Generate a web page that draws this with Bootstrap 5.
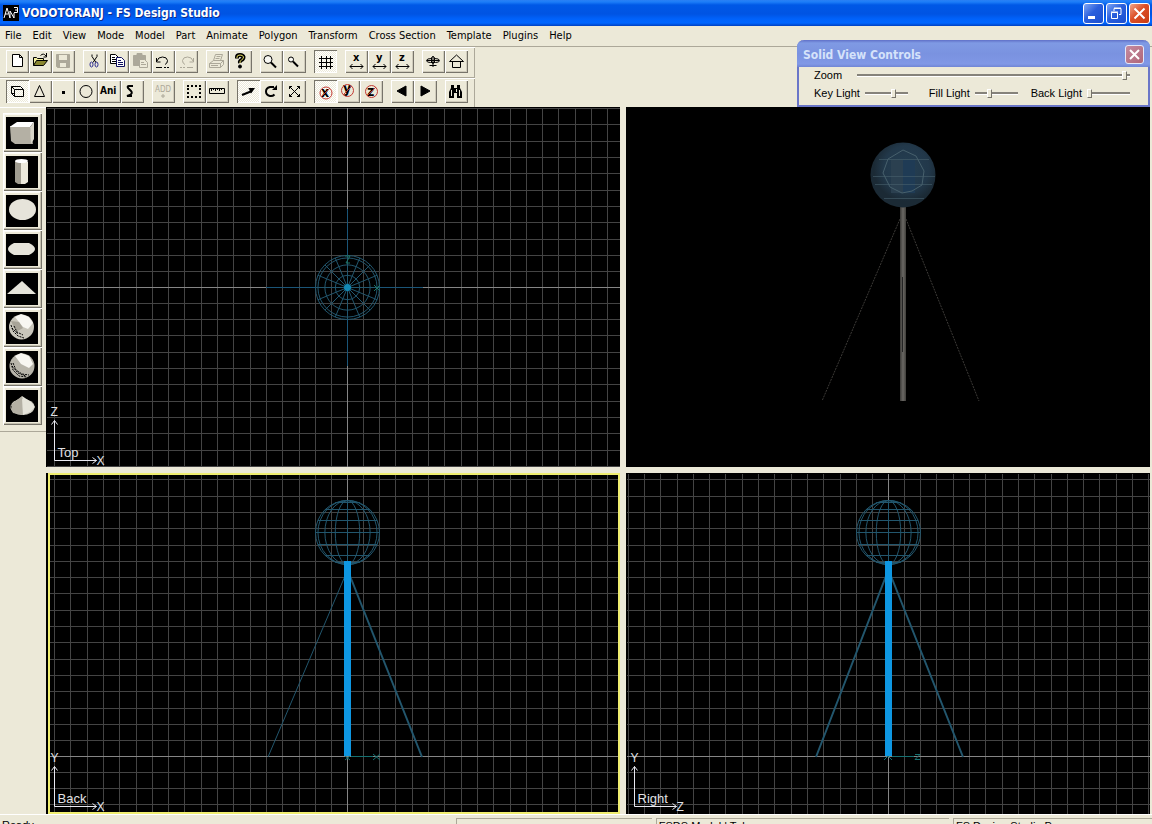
<!DOCTYPE html>
<html lang="en">
<head>
<meta charset="utf-8">
<meta name="viewport" content="width=device-width, initial-scale=1">
<title>VODOTORANJ - FS Design Studio</title>
<link rel="stylesheet" href="https://cdn.jsdelivr.net/npm/bootstrap@5.3.0/dist/css/bootstrap.min.css">
<style>
  body { background: #ece9d8; color: #000; font: 11px/16px "DejaVu Sans Condensed", "Liberation Sans", sans-serif; }
  svg { display: block; }
  button { border: 0; padding: 0; background: none; }
  .titlebar { height: 26px; padding: 0 2px 0 3px; gap: 3px;
    background: linear-gradient(#2a80f5 0, #1c7df8 2px, #0058e6 5px, #0054e3 14px, #0062fb 19px, #0066ff 23px, #0040c0 26px); }
  .titlebar h1 { font: bold 12px/20px "DejaVu Sans Condensed", sans-serif; color: #fff; text-shadow: 1px 1px #0b2c8c; }
  .winbtn { width: 21px; height: 21px; border: 1px solid #fff; border-radius: 3px; background: linear-gradient(135deg, #7fa6f5, #2a5fdc 45%, #1b4fd0); }
  .winbtn.shut { background: linear-gradient(135deg, #f0a58c, #dc4f27 45%, #c83c14); }
  .menubar { height: 20px; padding: 0 5px; gap: 11px; }
  .menubar a { color: #000; text-decoration: none; line-height: 19px; }
  .groove { border-top: 1px solid #aca899; }
  .tools { padding: 2px 0 0 6px; gap: 8px; width: 475px; height: 30px; box-shadow: inset 0 1px #fff, inset -1px 0 #aca899; border-top: 1px solid #aca899; }
  .tools.first { border-color: #fff; box-shadow: inset -1px 0 #aca899; }
  .tool { width: 23px; height: 23px; box-shadow: inset 1px 1px #fff, inset -1px -1px #77746a, inset -2px -2px #d0ccbc; }
  .tool.down { background: repeating-conic-gradient(#fff 0 25%, #ece9d8 0 50%) 0 0 / 2px 2px; box-shadow: inset 1px 1px #77746a, inset -1px -1px #fff; }
  .tool svg { width: 23px; height: 23px; fill: none; stroke: #000; }
  .tool text { stroke: none; fill: #000; }
  .tool:disabled svg { stroke: #aca899; }
  .tool:disabled text { fill: #aca899; }
  .side { width: 46px; }
  .shapes { padding: 5px 0 6px 3px; border-bottom: 1px solid #aca899; border-top: 1px solid #fff; }
  .shape { width: 39px; height: 39px; padding: 3px; box-shadow: inset 1px 1px #fff, inset -1px -1px #77746a, inset -2px -2px #c5c1b0, inset 2px 2px #fbfaf4; }
  .shape svg { width: 32px; height: 32px; background: #000; }
  .views { display: grid; grid-template: 360fr 341fr / 574fr 524fr; gap: 6px; padding-right: 2px; background: #ece9d8; }
  .pane { background: #000; min-width: 0; min-height: 0; overflow: hidden; }
  .pane svg { width: 100%; height: 100%; }
  .pane.active { border: 2px solid #f0ee70; box-shadow: -2px 0 #000; margin-left: 2px; }
  .pane.active svg { margin: -2px; width: calc(100% + 4px); height: calc(100% + 4px); }
  .grid path { stroke: #444; fill: none; }
  .grid .axis { stroke: #858585; }
  .wire { stroke: #22566d; fill: none; }
  .key { stroke: #e8e8f0; fill: none; }
  .key text { stroke: none; fill: #e0e0e4; font: 13px "Liberation Sans", sans-serif; }
  .key .ax { font-size: 12px; }
  .status { height: 10px; padding-top: 3px; gap: 4px; font: 11px/14px "Liberation Sans", sans-serif; overflow: hidden; border-top: 1px solid #fff; }
  .status span { height: 14px; white-space: nowrap; padding-left: 2px; }
  .status .cell { border-top: 1px solid #aca899; border-left: 1px solid #aca899; }
  .floater { position: absolute; top: 40px; right: 2px; width: 353px; height: 67px; background: #ece9d8;
    border: 2px solid #6a76c8; border-top: 0; border-radius: 7px 7px 0 0; font: 11px/14px "Liberation Sans", sans-serif; z-index: 5; }
  .floater header { height: 27px; margin: 0 -2px; padding: 2px 6px 0 6px; border-radius: 7px 7px 0 0;
    background: linear-gradient(#6070c8 0, #7f9ae4 3px, #7a92e0 14px, #8098e6 24px, #7085d4 27px); }
  .floater h2 { font: bold 12px/20px "DejaVu Sans Condensed", sans-serif; color: #d5e2fa; }
  .floater .shut { width: 19px; height: 19px; border: 1px solid #e4e8fa; border-radius: 3px; background: linear-gradient(135deg, #c58ba0, #b06678); }
  .lights { padding: 1px 18px 0 15px; }
  input[type=range] { appearance: none; background: none; height: 12px; margin: 0; min-width: 0; }
  input[type=range]::-webkit-slider-runnable-track { height: 3px; background: linear-gradient(#85827a 0 67%, #fff 67%); }
  input[type=range]::-webkit-slider-thumb { appearance: none; width: 5px; height: 9px; margin-top: -3px; background: #ece9d8; border: 1px solid; border-color: #fff #77746a #77746a #fff; }
  .lamp { width: 43px; }
</style>
</head>
<body class="vh-100 d-flex flex-column overflow-hidden">

<header class="titlebar d-flex align-items-center flex-shrink-0">
  <svg width="16" height="16" viewBox="0 0 16 16"><rect width="16" height="16" fill="#000"/><g fill="none" stroke="#fff"><path d="M1 13 4 3l3 10M2 9h3M7 13V6l4 7V8"/><path d="M11 2.500h3.500v5H11M12 5h2"/></g></svg>
  <h1 class="m-0 me-auto">VODOTORANJ - FS Design Studio</h1>
  <div class="d-flex" style="gap:2px">
    <button class="winbtn" aria-label="Minimize"><svg width="19" height="19"><path d="M4 12h7v3H4z" fill="#fff"/></svg></button>
    <button class="winbtn" aria-label="Restore"><svg width="19" height="19" fill="none" stroke="#fff"><path d="M7 7V4.500h7v6h-2M7 4h7M4.500 8.500h6v6h-6zM4 8h7"/></svg></button>
    <button class="winbtn shut" aria-label="Close"><svg width="19" height="19" stroke="#fff" stroke-width="2"><path d="m4.500 4.500 10 10m0-10-10 10"/></svg></button>
  </div>
</header>

<nav class="menubar d-flex flex-shrink-0" aria-label="Main menu">
  <a href="#">File</a><a href="#">Edit</a><a href="#">View</a><a href="#">Mode</a><a href="#">Model</a><a href="#">Part</a><a href="#">Animate</a><a href="#">Polygon</a><a href="#">Transform</a><a href="#">Cross Section</a><a href="#">Template</a><a href="#">Plugins</a><a href="#">Help</a>
</nav>

<div class="groove flex-shrink-0">
  <div class="tools first d-flex">
    <div class="d-flex">
      <button class="tool" aria-label="New"><svg><path d="M6.500 4.500h7l3 3v9h-10zM13.500 4.500v3h3" fill="#fff"/></svg></button>
      <button class="tool" aria-label="Open"><svg><path d="M4.500 15.500v-8h3l1 1h6v2" fill="#f4f0a0"/><path d="M4.500 15.500l3-5h11l-4 5z" fill="#8a8730"/><path d="M11.500 5.500q3-3 5.500.500M17.500 3v4h-3"/></svg></button>
      <button class="tool" aria-label="Save" disabled><svg><path d="M4.500 4.500h13v13h-12l-1-1z" fill="#aca899"/><path d="M7 5h8v5H7zM8 13h6v4H8z" fill="#ece9d8" stroke="none"/></svg></button>
    </div>
    <div class="d-flex">
      <button class="tool" aria-label="Cut"><svg><path d="M9 4.500v2l4 6M14 4.500v2l-4 6"/><g stroke="#2a2a90"><ellipse cx="8.500" cy="14.500" rx="1.500" ry="2.500"/><ellipse cx="13.500" cy="14.500" rx="1.500" ry="2.500"/></g></svg></button>
      <button class="tool" aria-label="Copy"><svg><path d="M4.500 4.500h5l3 3v6h-8z" fill="#fff"/><path d="M6 7.500h3m-3 2h5m-5 2h4"/><g stroke="#101060"><path d="M10.500 7.500h5l3 3v6h-8z" fill="#fff"/><path d="M12 10.500h3m-3 2h5m-5 2h5"/></g></svg></button>
      <button class="tool" aria-label="Paste" disabled><svg><path d="M4.500 5.500h12v10h-12zM8 3.500h5v3H8z" fill="#aca899"/><path d="M10.500 9.500h5l3 3v5h-8z" fill="#ece9d8"/><path d="M12 12.500h3m-3 2h5"/></svg></button>
      <button class="tool" aria-label="Undo"><svg><path d="M5 11q1-4 5.500-4t5 3.500q0 3-2.500 4M4.500 8v4h4"/><path d="M4 17.500h6m2 0h2m1 0h2"/></svg></button>
      <button class="tool" aria-label="Redo" disabled><svg><path d="M18 11q-1-4-5.500-4t-5 3.500q0 3 2.500 4M18.500 8v4h-4"/><path d="M5 17.500h2m1 0h2m2 0h6"/></svg></button>
    </div>
    <div class="d-flex">
      <button class="tool" aria-label="Print" disabled><svg><path d="M7.500 10.500l2-6h7l-2 6M3.500 13.500l4-3h10l-3 3zM3.500 13.500v4h11v-4M14.500 17.500l3-3v-4M10.500 6.500h4m-5 2h4M5 15.500h7"/></svg></button>
      <button class="tool" aria-label="Help"><svg><path d="M8 8.500V7q0-2 3-2t3.500 2q0 2-2 3t-1.500 3" stroke-width="4"/><path d="M8 8V7q0-2 3-2t3.500 2q0 2-2 3t-1.500 3" stroke="#e8e060"/><circle cx="11" cy="16.500" r="1.500" fill="#000"/></svg></button>
    </div>
    <div class="d-flex">
      <button class="tool" aria-label="Zoom in"><svg><circle cx="8" cy="9.500" r="4" fill="#f8f8f4"/><path d="m11 12.500 5 5" stroke-width="2"/></svg></button>
      <button class="tool" aria-label="Zoom out"><svg><circle cx="8" cy="9.500" r="2.500" fill="#f8f8f4"/><path d="m10 11.500 5 5" stroke-width="2"/></svg></button>
    </div>
    <div class="d-flex">
      <button class="tool down" aria-label="Grid"><svg><path d="M7.500 6v13m5-13v13m4-13v13M5 8.500h14M5 12.500h14M5 16.500h14"/></svg></button>
    </div>
    <div class="d-flex">
      <button class="tool" aria-label="Move X"><svg><text x="8" y="11" font-weight="bold" font-size="11">x</text><path d="M5 16.500h13M7.500 14 5 16.500 7.500 19m8-5 2.500 2.500-2.500 2.500"/></svg></button>
      <button class="tool" aria-label="Move Y"><svg><text x="8" y="11" font-weight="bold" font-size="11">y</text><path d="M5 16.500h13M7.500 14 5 16.500 7.500 19m8-5 2.500 2.500-2.500 2.500"/></svg></button>
      <button class="tool" aria-label="Move Z"><svg><text x="8" y="11" font-weight="bold" font-size="11">z</text><path d="M5 16.500h13M7.500 14 5 16.500 7.500 19m8-5 2.500 2.500-2.500 2.500"/></svg></button>
    </div>
    <div class="d-flex">
      <button class="tool" aria-label="Aircraft"><svg><path d="M9.500 8.500q-5 0-5 2t4 2h5q4 0 4-2t-5-2M9.500 7.500q1.500-2 3 0v5q-1.500 2-3 0zM11 6v11M7.500 15.500h7M5 10.500h12"/></svg></button>
      <button class="tool" aria-label="Scenery"><svg><path d="M7.500 11.500h8v6h-8zM4.500 11.500 11.500 5l7 6.500z"/></svg></button>
    </div>
  </div>
  <div class="tools d-flex">
    <div class="d-flex">
      <button class="tool down" aria-label="Part mode"><svg><path d="M5.500 6.500h9l3 3v7h-9l-3-3zM8.500 9.500h9M8.500 9.500v7M5.500 6.500l3 3M5.500 13.500h3"/></svg></button>
      <button class="tool" aria-label="Polygon mode"><svg><path d="m5.500 16.500 5-11 5 11z"/></svg></button>
      <button class="tool" aria-label="Point mode"><svg><path d="M10 11h3v3h-3z" fill="#000" stroke="none"/></svg></button>
      <button class="tool" aria-label="Circle"><svg><circle cx="11" cy="11.500" r="6"/></svg></button>
      <button class="tool" aria-label="Animate"><svg><text x="2" y="14" font-weight="bold" font-size="10">Ani</text></svg></button>
      <button class="tool" aria-label="Curve"><svg><path d="M12 6H8q-2 0-1 2l3 3q2 2-1 4l-3 1h5" stroke-width="2"/></svg></button>
    </div>
    <div class="d-flex">
      <button class="tool" aria-label="Add" disabled><svg><text x="3" y="12" font-size="8">ADD</text><path d="M10 15h2v2h-2z"/></svg></button>
    </div>
    <div class="d-flex">
      <button class="tool" aria-label="Select"><svg><path d="M4 6h14M4 17h14M5 8v8M17 8v8" stroke-width="2" stroke-dasharray="2 2"/></svg></button>
      <button class="tool" aria-label="Measure"><svg><path d="M3.500 8.500h15v5h-15zM5.500 9v2m2-2v1m2-1v2m2-2v1m2-1v2m2-2v1"/></svg></button>
    </div>
    <div class="d-flex">
      <button class="tool down" aria-label="Move"><svg><path d="m5 15 10-4" stroke-width="2"/><path d="M11.500 8h6.500l-4 5.500z" fill="#000" stroke="none"/></svg></button>
      <button class="tool" aria-label="Rotate"><svg><path d="M14.500 14.500q-2 2-4.500 1.500-4-1-4-4.500t4-4.500h4" stroke-width="2"/><path d="M12 10h5V5z" fill="#000" stroke="none"/></svg></button>
      <button class="tool" aria-label="Scale"><svg><path d="m6.500 6.500 10 10m0-10-10 10M6.500 9V6.500H9m5 0h2.500V9m0 5v2.500H14m-5 0H6.500V14"/></svg></button>
    </div>
    <div class="d-flex">
      <button class="tool down" aria-label="Lock X"><svg><text x="7" y="17" font-weight="bold" font-size="14">x</text><g stroke="#c23a34"><circle cx="12" cy="13" r="6"/><path d="m7 17 9-9"/></g></svg></button>
      <button class="tool" aria-label="Lock Y"><svg><text x="6" y="13" font-weight="bold" font-size="14">y</text><g stroke="#c23a34"><circle cx="10.500" cy="10.500" r="6"/><path d="m6 15 9-9"/></g></svg></button>
      <button class="tool" aria-label="Lock Z"><svg><text x="7" y="16" font-weight="bold" font-size="14">z</text><g stroke="#c23a34"><circle cx="11.500" cy="11.500" r="6"/><path d="m7 16 9-9"/></g></svg></button>
    </div>
    <div class="d-flex">
      <button class="tool" aria-label="Previous"><svg><path d="M15 6v10l-9-5z" fill="#000"/></svg></button>
      <button class="tool" aria-label="Next"><svg><path d="M7 6v10l9-5z" fill="#000"/></svg></button>
    </div>
    <div class="d-flex">
      <button class="tool" aria-label="Find"><svg><path d="M4 18v-6l2-4V5h3v3h3V5h3v3l2 4v6h-5v-5H9v5z" fill="#000" stroke="none"/><path d="M6.500 10v6m5-7v3m3-2v6" stroke="#ece9d8"/></svg></button>
    </div>
  </div>
</div>

<main class="d-flex flex-grow-1" style="min-height:0">
  <aside class="side flex-shrink-0">
    <div class="shapes d-flex flex-column">
      <button class="shape" aria-label="Box"><svg><path d="M4 9h20l3 18H9L5 24z" fill="#b4b0a4"/><path d="m5 9 6-4h17l-4 5H4z" fill="#fff"/><path d="m24 10 4-5v17l-3 5z" fill="#d8d5c8"/></svg></button>
      <button class="shape" aria-label="Cylinder"><svg><path d="M9 5h6v23h-3l-3-2z" fill="#a09c90"/><path d="M15 6h7v20l-3 2h-4z" fill="#ece9dc"/><ellipse cx="15.500" cy="5" rx="6.500" ry="2" fill="#fff"/></svg></button>
      <button class="shape" aria-label="Sphere"><svg><ellipse cx="16.500" cy="14.500" rx="13.500" ry="10.500" fill="#e6e4da"/></svg></button>
      <button class="shape" aria-label="Capsule"><svg><path d="M8 9h15q6 3 6 6t-6 6H8q-6-3-6-6t6-6z" fill="#e6e4da"/></svg></button>
      <button class="shape" aria-label="Triangle"><svg><path d="m1 21 15-13 14 13z" fill="#e6e4da"/></svg></button>
      <button class="shape" aria-label="Faceted sphere"><svg><circle cx="15.500" cy="15" r="12.500" fill="#c9c6bb"/><path d="m9 5 6-3 8 3 4 6-5 6-5-2-4-5z" fill="#f8f7f2"/><path d="m5 9 8 1 4 6-7 4z" fill="#a8a498"/><path d="M5 13l2 6 5 5 6 2M8 14l3 6 6 3M6 16l6 6" stroke="#000" stroke-dasharray="2 1" fill="none"/></svg></button>
      <button class="shape" aria-label="Smooth sphere"><svg><circle cx="16" cy="15" r="12.500" fill="#b8b5aa"/><path d="m9 5 6-3 8 3 4 8-4 4-8-4z" fill="#f8f7f2"/><path d="M5 12l2 7 6 6 8 1M7 12l3 7 6 4 7 1M6 15l6 7 8 3" stroke="#000" stroke-dasharray="2 1" fill="none"/></svg></button>
      <button class="shape" aria-label="Cone"><svg><ellipse cx="16.500" cy="17" rx="12" ry="8" fill="#c9c6bb"/><path d="M16 6 7 13l-3 4 3 6 10 2z" fill="#b4b0a4"/><path d="m16 6 9 6 4 5-5 5-7 3z" fill="#e6e4da"/><path d="M15 6 5 13v6" stroke="#000" fill="none" stroke-dasharray="2 1"/></svg></button>
    </div>
  </aside>

  <div class="views flex-grow-1">
    <section class="pane" aria-label="Top view">
      <svg viewBox="0 0 574 360" preserveAspectRatio="xMidYMid slice">
        <g class="grid" data-x="301" data-y="180"></g>
        <path d="M301.500 102v157M220 180.500h157" stroke="#1a5578"/>
        <g class="wire" id="topball" transform="translate(301.500 180.500)"></g>
        <circle cx="301.500" cy="180.500" r="3.500" fill="#1289b5"/>
        <path d="M299 149h5l-4 7h4M328 178l6 6m0-6-6 6" stroke="#1c7465" fill="none"/>
        <g class="key" transform="translate(8.500 353.500)"><path d="M0-40V0h42M-3-36l3-4 3 4M38-3l4 3-4 3"/><text x="3" y="-4">Top</text><text class="ax" x="-4" y="-45">Z</text><text class="ax" x="42" y="4">X</text></g>
      </svg>
    </section>
    <section class="pane" aria-label="Solid view">
      <svg viewBox="0 0 524 360" preserveAspectRatio="xMidYMid slice">
        <defs>
          <radialGradient id="ball" cx=".55" cy=".4"><stop offset="0" stop-color="#253f52"/><stop offset=".7" stop-color="#22384a"/><stop offset="1" stop-color="#1b2a35"/></radialGradient>
          <linearGradient id="pole"><stop offset="0" stop-color="#3a3936"/><stop offset=".5" stop-color="#6a6864"/><stop offset="1" stop-color="#3f3e3a"/></linearGradient>
        </defs>
        <path d="m274 112-78 182M280 112l73 182" stroke="#3c3a37" stroke-dasharray="2 1" fill="none"/>
        <rect x="274" y="100" width="6" height="194" fill="url(#pole)"/>
        <path d="M276.500 170v75" stroke="#242424"/>
        <circle cx="277" cy="68" r="32.500" fill="url(#ball)"/>
        <path d="M265 53h12v33h-12z" fill="#2b4050"/><path d="M277 53h12v33h-12z" fill="#1f3b55"/>
        <g fill="none" stroke="#47606c"><path d="M253 52.500h50M247 69.500h62M249 77.500h57M258 91.500h40" stroke-opacity=".6"/><path d="m277 43 13 6 8 15-2 14-10 6-10 2-12-6-7-14 5-14z"/></g>
      </svg>
    </section>
    <section class="pane active" aria-label="Back view">
      <svg viewBox="2 0 572 341" preserveAspectRatio="xMidYMid slice">
        <g class="grid" data-x="301" data-y="283"></g>
        <g class="wire globe" transform="translate(301.500 59.500)"></g>
        <path class="wire" d="m299 103-77 181"/><path class="wire" d="m304 103 72 181" stroke-width="2"/>
        <rect x="298" y="88" width="7" height="195" fill="#0e97e2"/>
        <path d="M299 287l5-4m-5 0 5 4M305 283.500h22M327 281l7 6m0-6-7 6" stroke="#157070" fill="none"/>
        <g class="key" transform="translate(8.500 333.500)"><path d="M0-40V0h42M-3-36l3-4 3 4M38-3l4 3-4 3"/><text x="3" y="-4">Back</text><text class="ax" x="-4" y="-45">Y</text><text class="ax" x="42" y="4">X</text></g>
      </svg>
    </section>
    <section class="pane" aria-label="Right view">
      <svg viewBox="0 0 524 341" preserveAspectRatio="xMidYMid slice">
        <g class="grid" data-x="262" data-y="283"></g>
        <g class="wire globe" transform="translate(262.500 59.500)"></g>
        <path class="wire" d="m260 103-70 181M265 103l72 181" stroke-width="2"/>
        <rect x="259" y="88" width="7" height="195" fill="#0e97e2"/>
        <path d="M258 287l4-4 4 4M266 283.500h22M289 281.500h5l-5 5h5" stroke="#157070" fill="none"/>
        <g class="key" transform="translate(8.500 333.500)"><path d="M0-40V0h42M-3-36l3-4 3 4M38-3l4 3-4 3"/><text x="3" y="-4">Right</text><text class="ax" x="-4" y="-45">Y</text><text class="ax" x="42" y="4">Z</text></g>
      </svg>
    </section>
  </div>
</main>

<footer class="status d-flex flex-shrink-0">
  <span style="flex:454">Ready</span><span class="cell" style="flex:195"></span><span class="cell" style="flex:293">FSDS Model | Tube</span><span class="cell" style="flex:198">FS Design Studio Pro</span>
</footer>

<section class="floater" aria-label="Solid View Controls">
  <header class="d-flex align-items-center justify-content-between">
    <h2 class="m-0">Solid View Controls</h2>
    <button class="shut" aria-label="Close panel"><svg width="17" height="17" stroke="#fff" stroke-width="2"><path d="m4 4 9 9m0-9-9 9"/></svg></button>
  </header>
  <div class="lights">
    <div class="d-flex align-items-center justify-content-between"><label for="zoom">Zoom</label><input id="zoom" type="range" value="99" style="width:273px"></div>
    <div class="d-flex align-items-center justify-content-between pt-1">
      <label for="key">Key Light</label><input class="lamp" id="key" type="range" value="68">
      <label class="ms-3" for="fill">Fill Light</label><input class="lamp" id="fill" type="range" value="33">
      <label class="ms-2" for="back">Back Light</label><input class="lamp" id="back" type="range" value="0">
    </div>
  </div>
</section>

<script src="https://cdn.jsdelivr.net/npm/bootstrap@5.3.0/dist/js/bootstrap.bundle.min.js"></script>
<script>
  // Grid lines spread out from the model's origin; the two through it are brighter.
  const STEP = 16.3;
  document.querySelectorAll('.grid').forEach(g => {
    const ox = +g.dataset.x, oy = +g.dataset.y;
    let d = '';
    for (let k = -40; k <= 40; k++) {
      const o = Math.trunc(k * STEP) + 0.5;
      if (ox + o > 1 && ox + o < 900) d += `M${ox + o} 1V700`;
      if (oy + o > 1 && oy + o < 700) d += `M1 ${oy + o}H900`;
    }
    g.innerHTML = `<path d="${d}"/><path class="axis" d="M${ox + .5} 1V700M1 ${oy + .5}H900"/>`;
  });
  // Sphere wireframe, 16 segments round.
  const R = 32, ring = [1, 2, 3, 4].map(i => R * Math.sin(i * Math.PI / 8));
  let side = `<path d="M0-${R}V${R}"/>` + ring.map(r => `<ellipse rx="${r}" ry="${R}"/>`).join('');
  for (let i = -3; i <= 3; i++) {
    const y = Math.round(R * Math.sin(i * Math.PI / 8)), w = R * Math.cos(i * Math.PI / 8);
    side += `<path d="M${-w} ${y}H${w}"/>`;
  }
  document.querySelectorAll('.globe').forEach(g => g.innerHTML = side);
  let top16 = ring.map(r => `<circle r="${r}"/>`).join('');
  for (let i = 0; i < 16; i++) top16 += `<path d="M0 0L${R * Math.cos(i * Math.PI / 8)} ${R * Math.sin(i * Math.PI / 8)}"/>`;
  document.getElementById('topball').innerHTML = top16;
</script>
</body>
</html>
